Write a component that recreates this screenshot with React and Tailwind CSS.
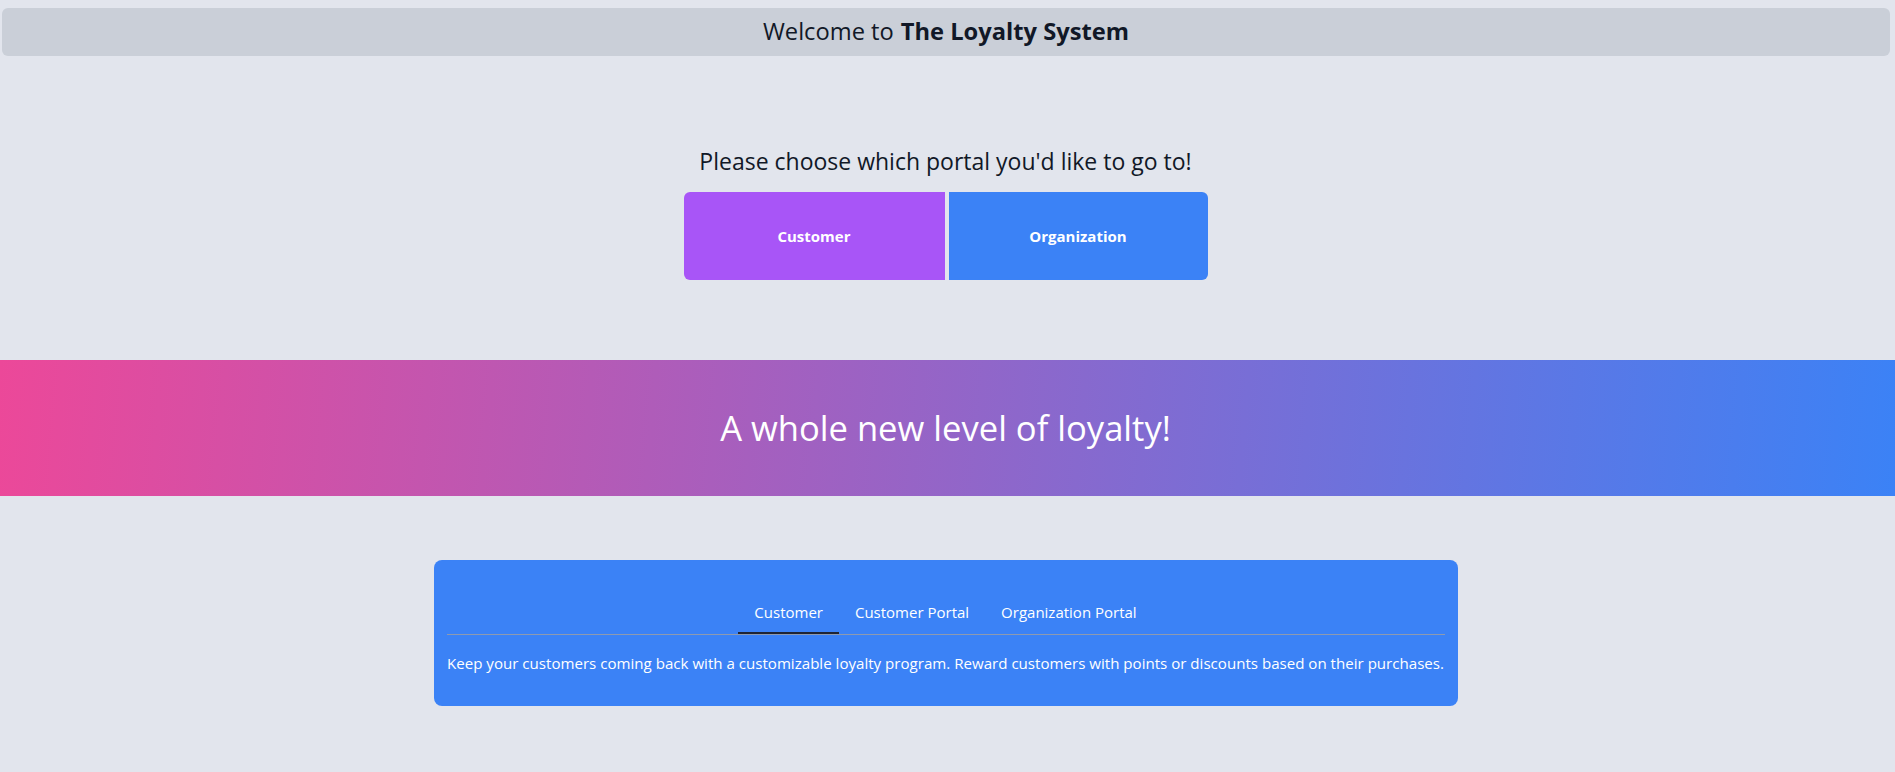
import React, { useState } from "react";

const tabs = [
  {
    id: "customer",
    label: "Customer",
    body: "Keep your customers coming back with a customizable loyalty program. Reward customers with points or discounts based on their purchases.",
  },
  {
    id: "customer-portal",
    label: "Customer Portal",
    body: "Customers can sign in to view their points, rewards and purchase history.",
  },
  {
    id: "organization-portal",
    label: "Organization Portal",
    body: "Organizations can manage their loyalty programs, rewards and customers.",
  },
];

export default function App() {
  const [active, setActive] = useState("customer");
  const current = tabs.find((t) => t.id === active);

  return (
    <div className="min-h-screen bg-[#e2e5ed] pt-2 font-['Open_Sans','Noto_Sans',sans-serif] text-[#111827]">
      {/* Top bar */}
      <header className="ml-0.5 mr-[5px] flex h-12 items-center justify-center rounded-md bg-[#cacfd8] text-[23.7px]">
        <span>Welcome to</span>
        <span className="ml-[7px] font-bold">The Loyalty System</span>
      </header>

      {/* Portal chooser */}
      <section className="mt-[89px] flex flex-col items-center pr-1">
        <p className="text-[23px] leading-8">Please choose which portal you'd like to go to!</p>
        <div className="mt-[15px] flex gap-1">
          <button className="h-[88px] w-[261px] rounded-l-md bg-[#a855f7] text-[15px] font-bold text-white">
            Customer
          </button>
          <button className="h-[88px] w-[259px] rounded-r-md bg-[#3b82f6] text-[15px] font-bold text-white">
            Organization
          </button>
        </div>
      </section>

      {/* Gradient banner */}
      <section className="mt-20 flex h-[136px] items-center justify-center bg-[linear-gradient(95deg,#ec4899,#3b82f6)] pr-1">
        <h2 className="text-[34.6px] text-white">A whole new level of loyalty!</h2>
      </section>

      {/* Tabs card */}
      <div className="mt-16 flex justify-center pr-1">
        <section className="w-[1024px] rounded-lg bg-[#3b82f6] px-[13px] pb-[31px] pt-8 text-white">
          <div className="flex justify-center">
            {tabs.map((t) => (
              <button
                key={t.id}
                onClick={() => setActive(t.id)}
                className={
                  t.id === active
                    ? "border-b-2 border-[#1f2433] px-4 py-2 text-[15px] leading-6"
                    : "border-b-2 border-transparent px-4 py-2 text-[15px] leading-6"
                }
              >
                {t.label}
              </button>
            ))}
          </div>
          <div className="h-px bg-[#8d9ab0]" />
          <p className="pt-4 text-center text-[15.1px] leading-6">{current.body}</p>
        </section>
      </div>
    </div>
  );
}
